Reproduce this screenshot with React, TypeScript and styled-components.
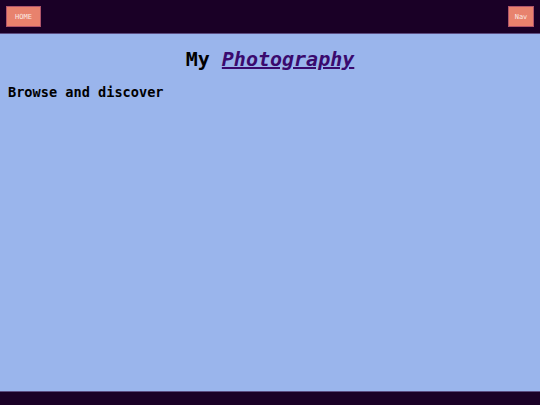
import React from "react";
import styled, { createGlobalStyle } from "styled-components";

const Global = createGlobalStyle`
  html, body { margin: 0; padding: 0; }
  body { font-family: "DejaVu Sans Mono", monospace; background: #9ab5ec; }
  #root { min-height: 405px; }
`;

const Page = styled.div`
  display: flex;
  flex-direction: column;
  height: 405px;
  background: #9ab5ec;
`;

const Header = styled.header`
  display: flex;
  justify-content: space-between;
  align-items: flex-start;
  height: 34px;
  box-sizing: border-box;
  padding: 6px 6px 0 6px;
  background: #1a0026;
  border-bottom: 1px solid #5b4c80;
`;

const NavButton = styled.button<{ $w: number }>`
  width: ${(p) => p.$w}px;
  height: 21px;
  padding: 0;
  background: #e8826d;
  border: 1px solid #b0556a;
  color: #fbe9e3;
  font-family: "DejaVu Sans Mono", monospace;
  font-size: 7px;
  font-weight: normal;
  display: flex;
  align-items: center;
  justify-content: center;
`;

const Main = styled.main`
  flex: 1;
  padding: 0 8px;
`;

const Title = styled.h1`
  margin: 12px 0 0 0;
  text-align: center;
  font-size: 20px;
  line-height: 26px;
  font-weight: bold;
  color: #000;
`;

const TitleLink = styled.a`
  color: #3a0a6e;
  font-style: italic;
  text-decoration: underline;
`;

const Subtitle = styled.p`
  margin: 11px 0 0 0;
  font-size: 13.6px;
  line-height: 18px;
  font-weight: bold;
  color: #000;
`;

const Footer = styled.footer`
  height: 14px;
  box-sizing: border-box;
  background: #1a0026;
  border-top: 1px solid #5b4c80;
`;

export default function App() {
  return (
    <Page>
      <Global />
      <Header>
        <NavButton $w={35}>HOME</NavButton>
        <NavButton $w={26}>Nav</NavButton>
      </Header>
      <Main>
        <Title>
          My <TitleLink href="#">Photography</TitleLink>
        </Title>
        <Subtitle>Browse and discover</Subtitle>
      </Main>
      <Footer />
    </Page>
  );
}
